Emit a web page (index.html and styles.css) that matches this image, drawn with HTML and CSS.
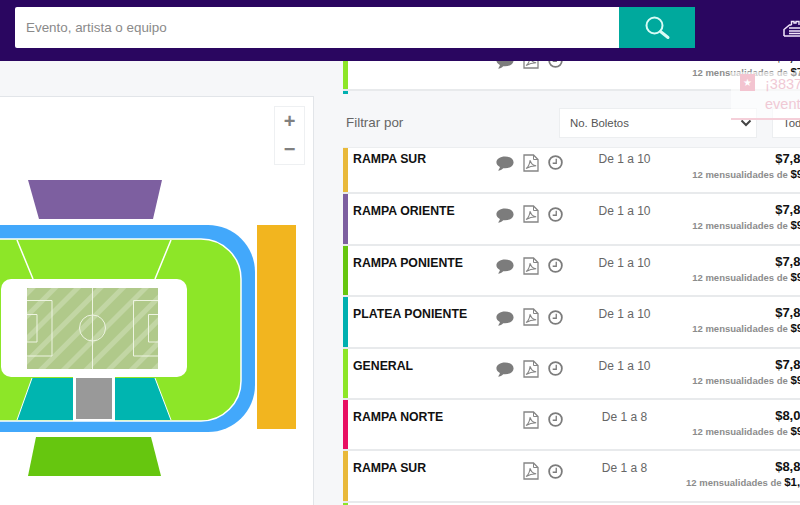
FILE: index.html
```html
<!DOCTYPE html>
<html lang="es">
<head>
    <meta charset="UTF-8">
    <title>Boletos</title>
    <link rel="stylesheet" href="styles.css">
</head>
<body>
    <svg class="defs" width="0" height="0">
        <symbol id="ico-chat" viewBox="0 0 18 16">
            <path d="M9 .5C4.200 .5 .4 3 .4 6.300c0 2 1.400 3.700 3.500 4.800-.2 1.300-.9 2.500-1.900 3.400 2 0 3.900-.9 5.200-2.300.6 .1 1.200 .1 1.800 .1 4.800 0 8.600-2.600 8.600-5.900S13.800 .5 9 .5z" fill="#7c7c7c"/>
        </symbol>
        <symbol id="ico-pdf" viewBox="0 0 16 18">
            <path d="M1 1h9.500L15 5.500V17H1z" fill="#fff" stroke="#858585" stroke-width="1.300"/>
            <path d="M10.500 1v4.500H15" fill="none" stroke="#858585" stroke-width="1"/>
            <path d="M3 14.500c2-1 3.500-4 4.200-8.500.6 3.500 2.300 5.500 6 5.700-3.500 0-7 .8-10.200 2.800z" fill="none" stroke="#858585" stroke-width="1.100"/>
        </symbol>
        <symbol id="ico-clock" viewBox="0 0 16 16">
            <circle cx="8" cy="8" r="6.800" fill="#fff" stroke="#7c7c7c" stroke-width="1.900"/>
            <path d="M8.800 4v4.800H5" fill="none" stroke="#7c7c7c" stroke-width="1.400"/>
        </symbol>
    </svg>

    <header class="topbar">
        <div class="search">
            <div class="search-input">Evento, artista o equipo</div>
            <div class="search-btn">
                <svg width="28" height="28" viewBox="0 0 28 28">
                    <circle cx="11.500" cy="11.500" r="8" fill="none" stroke="#d8fbf5" stroke-width="2"/>
                    <path d="M17.500 17.500l7.500 6" fill="none" stroke="#d8fbf5" stroke-width="3" stroke-linecap="round"/>
                </svg>
            </div>
        </div>
        <svg class="cart" width="17" height="17" viewBox="0 0 17 17">
            <path d="M1 16V9.500L6.500 5H8.500M1 16H17" fill="none" stroke="#f2e6fb" stroke-width="1.500"/>
            <path d="M8.500 5V1.500h2.500V3h2V1.500h3V5" fill="none" stroke="#f2e6fb" stroke-width="1.400"/>
            <path d="M6 8H17M6 11H17M6 13.500H17" fill="none" stroke="#f2e6fb" stroke-width="1.300"/>
        </svg>
    </header>

    <main class="content">
        <section class="map-card">
            <div class="zoom-ctl">
                <span class="zoom-btn">+</span>
                <span class="zoom-btn">−</span>
            </div>
            <svg class="stadium" width="313" height="409" viewBox="0 97 313 409">
                <defs>
                    <pattern id="turf" width="16" height="16" patternUnits="userSpaceOnUse" patternTransform="rotate(-45)">
                        <rect width="16" height="16" fill="#b0c98a"/>
                        <rect width="16" height="5" fill="#c2d6a4"/>
                    </pattern>
                </defs>
                <path d="M28 180H162L153 219H39z" fill="#7d5fa0"/>
                <path d="M-20 225H208a47 47 0 0 1 47 47V385a47 47 0 0 1-47 47H-20z" fill="#42a8fb"/>
                <path d="M-20 239H201a40 40 0 0 1 40 40V381a40 40 0 0 1-40 40H-20z" fill="#8de628" stroke="#fff" stroke-width="1.500"/>
                <rect x="1" y="279" width="186" height="98" rx="10" fill="#fff"/>
                <path d="M17 240L33 279M171 240L155 279" stroke="#fff" stroke-width="1.500"/>
                <rect x="73" y="377" width="42" height="44" fill="#fff"/>
                <path d="M32 378H73V420H17z" fill="#00b5b0"/>
                <path d="M115 378H155L171 420H115z" fill="#00b5b0"/>
                <rect x="76" y="378" width="36" height="41" fill="#999"/>
                <path d="M32 378L17 420M155 378L171 420" stroke="#fff" stroke-width="1"/>
                <rect x="27" y="288" width="131" height="81" fill="url(#turf)"/>
                <g fill="none" stroke="#eef4e2" stroke-width="1">
                    <path d="M92.500 288V369"/>
                    <circle cx="92.500" cy="328" r="13"/>
                    <path d="M27 300.500H52V356H27M27 314.500H37V342H27"/>
                    <path d="M158 300.500H133.500V356H158M158 314.500H148.500V342H158"/>
                </g>
                <path d="M36 437H151L161 476H28z" fill="#66c60f"/>
                <rect x="257" y="225" width="39" height="204" fill="#f2b51f"/>
            </svg>
        </section>

        <section class="tickets">
            <div class="row row-peek">
                <div class="bar bar-lime"></div>
                <div class="zone">GENERAL</div>
                <div class="icons">
                    <svg class="i-chat"><use href="#ico-chat"/></svg>
                    <svg class="i-pdf"><use href="#ico-pdf"/></svg>
                    <svg class="i-clock"><use href="#ico-clock"/></svg>
                </div>
                <div class="qty">De 1 a 10</div>
                <div class="price"><b>$7,800.00</b><small>12 mensualidades de <b>$750.00</b></small></div>
            </div>
            <div class="peek-next"></div>

            <div class="filters">
                <span class="filters-label">Filtrar por</span>
                <div class="select">No. Boletos
                    <svg width="12" height="8" viewBox="0 0 12 8"><path d="M1.500 1.500L6 6l4.500-4.500" fill="none" stroke="#444" stroke-width="2"/></svg>
                </div>
                <div class="select select-all">Todos</div>
            </div>

            <div class="row row-first">
                <div class="bar bar-yellow"></div>
                <div class="zone">RAMPA SUR</div>
                <div class="icons">
                    <svg class="i-chat"><use href="#ico-chat"/></svg>
                    <svg class="i-pdf"><use href="#ico-pdf"/></svg>
                    <svg class="i-clock"><use href="#ico-clock"/></svg>
                </div>
                <div class="qty">De 1 a 10</div>
                <div class="price"><b>$7,800.00</b><small>12 mensualidades de <b>$975.00</b></small></div>
            </div>
            <div class="row">
                <div class="bar bar-purple"></div>
                <div class="zone">RAMPA ORIENTE</div>
                <div class="icons">
                    <svg class="i-chat"><use href="#ico-chat"/></svg>
                    <svg class="i-pdf"><use href="#ico-pdf"/></svg>
                    <svg class="i-clock"><use href="#ico-clock"/></svg>
                </div>
                <div class="qty">De 1 a 10</div>
                <div class="price"><b>$7,800.00</b><small>12 mensualidades de <b>$975.00</b></small></div>
            </div>
            <div class="row">
                <div class="bar bar-green"></div>
                <div class="zone">RAMPA PONIENTE</div>
                <div class="icons">
                    <svg class="i-chat"><use href="#ico-chat"/></svg>
                    <svg class="i-pdf"><use href="#ico-pdf"/></svg>
                    <svg class="i-clock"><use href="#ico-clock"/></svg>
                </div>
                <div class="qty">De 1 a 10</div>
                <div class="price"><b>$7,800.00</b><small>12 mensualidades de <b>$975.00</b></small></div>
            </div>
            <div class="row">
                <div class="bar bar-teal"></div>
                <div class="zone">PLATEA PONIENTE</div>
                <div class="icons">
                    <svg class="i-chat"><use href="#ico-chat"/></svg>
                    <svg class="i-pdf"><use href="#ico-pdf"/></svg>
                    <svg class="i-clock"><use href="#ico-clock"/></svg>
                </div>
                <div class="qty">De 1 a 10</div>
                <div class="price"><b>$7,800.00</b><small>12 mensualidades de <b>$975.00</b></small></div>
            </div>
            <div class="row">
                <div class="bar bar-lime"></div>
                <div class="zone">GENERAL</div>
                <div class="icons">
                    <svg class="i-chat"><use href="#ico-chat"/></svg>
                    <svg class="i-pdf"><use href="#ico-pdf"/></svg>
                    <svg class="i-clock"><use href="#ico-clock"/></svg>
                </div>
                <div class="qty">De 1 a 10</div>
                <div class="price"><b>$7,800.00</b><small>12 mensualidades de <b>$975.00</b></small></div>
            </div>
            <div class="row">
                <div class="bar bar-pink"></div>
                <div class="zone">RAMPA NORTE</div>
                <div class="icons">
                    <svg class="i-pdf"><use href="#ico-pdf"/></svg>
                    <svg class="i-clock"><use href="#ico-clock"/></svg>
                </div>
                <div class="qty">De 1 a 8</div>
                <div class="price"><b>$8,000.00</b><small>12 mensualidades de <b>$999.00</b></small></div>
            </div>
            <div class="row">
                <div class="bar bar-yellow"></div>
                <div class="zone">RAMPA SUR</div>
                <div class="icons">
                    <svg class="i-pdf"><use href="#ico-pdf"/></svg>
                    <svg class="i-clock"><use href="#ico-clock"/></svg>
                </div>
                <div class="qty">De 1 a 8</div>
                <div class="price"><b>$8,800.00</b><small>12 mensualidades de <b>$1,100.00</b></small></div>
            </div>
            <div class="row">
                <div class="bar bar-lime"></div>
            </div>
        </section>
    </main>

    <div class="toast">
        <span class="toast-icon">★</span>
        <p>¡38374<br>evento</p>
    </div>
</body>
</html>
```

FILE: styles.css
```css
html, body {
    margin: 0;
    height: 505px;
    overflow: hidden;
}
body {
    width: 800px;
    position: relative;
    font-family: "Liberation Sans", Arial, sans-serif;
    background: #f6f7f9;
}
.defs {
    position: absolute;
}
.topbar {
    position: relative;
    z-index: 2;
    height: 61px;
    box-sizing: border-box;
    padding: 7px 0 0 15px;
    display: flex;
    background: #2a0660;
}
.search {
    display: flex;
    height: 41px;
}
.search-input {
    width: 593px;
    padding-left: 11px;
    line-height: 42px;
    font-size: 13.400px;
    color: #8a8a8a;
    background: #fff;
    border-radius: 2px 0 0 2px;
}
.search-btn {
    width: 76px;
    display: flex;
    align-items: center;
    justify-content: center;
    background: #00a99d;
}
.cart {
    margin: 13px 0 0 88px;
}
.content {
    display: flex;
    align-items: flex-start;
}
.map-card {
    position: relative;
    width: 313px;
    height: 409px;
    flex: none;
    margin-top: 35px;
    background: #fff;
    border-top: 1px solid #e2e5e9;
    border-right: 1px solid #e2e5e9;
}
.stadium {
    display: block;
}
.zoom-ctl {
    position: absolute;
    top: 9px;
    left: 274px;
    width: 29px;
    height: 57px;
    display: flex;
    flex-direction: column;
    border: 1px solid #eef0f2;
    background: #fff;
}
.zoom-btn {
    height: 28px;
    line-height: 28px;
    text-align: center;
    font-size: 20px;
    font-weight: bold;
    color: #808080;
}
.tickets {
    width: 490px;
    flex: none;
    margin-left: 29px;
}
.row {
    position: relative;
    height: 49.400px;
    display: flex;
    align-items: flex-start;
    background: #fff;
    border-bottom: 2px solid #e8eaec;
}
.row-peek {
    margin-top: -21px;
}
.row-peek .zone,
.row-peek .qty {
    padding-top: 0;
}
.row-peek .price {
    padding-top: 9px;
}
.row-first {
    height: 44.400px;
}
.row-first .zone,
.row-first .qty,
.row-first .price {
    padding-top: 3.500px;
}
.row-first .icons {
    margin-top: 5px;
}
.bar {
    width: 5px;
    height: 100%;
    flex: none;
}
.bar-lime { background: #8de628; }
.bar-yellow { background: #e9b93a; }
.bar-purple { background: #7d5fa0; }
.bar-green { background: #66c60f; }
.bar-teal { background: #00b0b0; }
.bar-pink { background: #e80f62; }
.peek-next {
    width: 5px;
    height: 3px;
    background: #00b0b0;
}
.zone {
    width: 139px;
    padding: 9px 0 0 5px;
    flex: none;
    font-size: 12.300px;
    font-weight: bold;
    line-height: 16px;
    color: #111;
}
.icons {
    width: 71px;
    height: 20px;
    flex: none;
    margin-top: 10px;
    display: flex;
    justify-content: flex-end;
    align-items: center;
    gap: 9px;
}
.i-chat { width: 18px; height: 16px; margin-top: 3px; }
.i-pdf { width: 16px; height: 18px; }
.i-clock { width: 15px; height: 15px; }
.qty {
    width: 123px;
    padding-top: 9px;
    flex: none;
    text-align: center;
    font-size: 12px;
    line-height: 16px;
    color: #666;
}
.price {
    width: 147px;
    flex: none;
    padding-top: 8px;
    text-align: right;
    white-space: nowrap;
    font-size: 13px;
    line-height: 16px;
    color: #111;
}
.price > b {
    display: block;
}
.price small {
    display: block;
    margin-right: 1px;
    font-size: 9.500px;
    font-weight: bold;
    line-height: 14px;
    color: #8c8c8c;
}
.price small b {
    font-size: 11.500px;
    color: #111;
}
.filters {
    position: relative;
    height: 53.600px;
    box-sizing: border-box;
    display: flex;
    align-items: center;
    padding: 4px 0 0 3px;
    border-bottom: 1px solid #eceef0;
}
.filters-label {
    width: 213px;
    flex: none;
    font-size: 13.400px;
    color: #666;
}
.select {
    width: 198px;
    height: 30px;
    box-sizing: border-box;
    flex: none;
    display: flex;
    align-items: center;
    justify-content: space-between;
    padding: 0 4px 0 10px;
    background: #fff;
    border: 1px solid #eceef0;
    font-size: 11.400px;
    color: #555;
}
.select-all {
    margin-left: 15px;
}
.toast {
    position: absolute;
    z-index: 3;
    top: 72px;
    left: 731px;
    width: 69px;
    height: 48px;
    box-sizing: border-box;
    padding: 2px 0 0 9px;
    display: flex;
    gap: 10px;
    background: rgba(255, 255, 255, .6);
    border-bottom: 2px solid #f5cfd9;
}
.toast-icon {
    width: 15px;
    height: 17px;
    flex: none;
    text-align: center;
    font-size: 10px;
    line-height: 17px;
    color: #fff;
    background: #f3c4d0;
}
.toast p {
    margin: 0;
    white-space: nowrap;
    font-size: 14.500px;
    line-height: 20px;
    color: #f0c9d5;
}
```
